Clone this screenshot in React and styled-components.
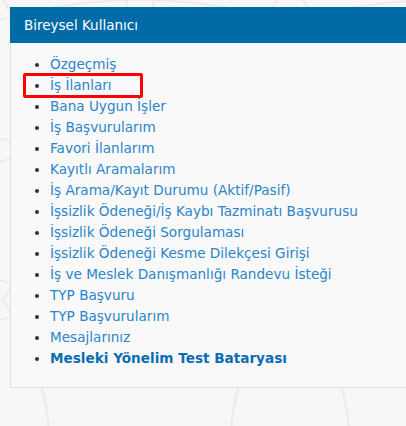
import React from 'react';
import styled, { createGlobalStyle } from 'styled-components';

const pattern = encodeURIComponent(
  `<svg xmlns="http://www.w3.org/2000/svg" width="300" height="300" viewBox="0 0 300 300">
    <g fill="none" stroke="#ebebeb" stroke-width="2">
      <path d="M-50 40 Q150 -40 350 40"/>
      <path d="M-50 260 Q150 340 350 260"/>
      <path d="M0 -20 Q120 150 0 320"/>
      <path d="M300 -20 Q180 150 300 320"/>
      <path d="M-40 120 Q150 200 340 120"/>
      <path d="M-40 180 Q150 100 340 180"/>
      <path d="M135 300 L150 250 L165 300"/>
      <path d="M135 0 L150 50 L165 0"/>
    </g>
  </svg>`
);

const GlobalStyle = createGlobalStyle`
  html, body {
    margin: 0;
    padding: 0;
    overflow: hidden;
  }
  body {
    background-color: #f7f7f7;
    background-image: url("data:image/svg+xml,${pattern}");
    background-position: -10px 0;
    font-family: "DejaVu Sans", Verdana, sans-serif;
  }
`;

const Page = styled.div`
  box-sizing: border-box;
  width: 100%;
  padding: 7px 0 38px 10px;
`;

const Panel = styled.div`
  background: #f9f9f9;
  border: 1px solid #e1e1e1;
  border-right: none;
`;

const PanelHeader = styled.div`
  background: #006ba6;
  color: #fff;
  height: 36px;
  line-height: 36px;
  padding-left: 14px;
  font-size: 13.5px;
  margin: -1px 0 0 -1px;
`;

const MenuList = styled.ul`
  margin: 0;
  padding: 11px 0 18px 39px;
  list-style: disc;
`;

const MenuItem = styled.li`
  position: relative;
  font-size: 13.6px;
  line-height: 21px;
  color: #333;

  ${(p) =>
    p.$highlighted &&
    `
    &::after {
      content: '';
      position: absolute;
      left: -27px;
      top: -2px;
      width: 114px;
      height: 19px;
      border: 3px solid #f00;
      border-radius: 2px;
      pointer-events: none;
    }
  `}
`;

const MenuLink = styled.a`
  color: ${(p) => (p.$bold ? '#0a6db3' : '#2a85c9')};
  font-weight: ${(p) => (p.$bold ? 'bold' : 'normal')};
  text-decoration: none;
  cursor: pointer;
`;

const items = [
  'Özgeçmiş',
  'İş İlanları',
  'Bana Uygun İşler',
  'İş Başvurularım',
  'Favori İlanlarım',
  'Kayıtlı Aramalarım',
  'İş Arama/Kayıt Durumu (Aktif/Pasif)',
  'İşsizlik Ödeneği/İş Kaybı Tazminatı Başvurusu',
  'İşsizlik Ödeneği Sorgulaması',
  'İşsizlik Ödeneği Kesme Dilekçesi Girişi',
  'İş ve Meslek Danışmanlığı Randevu İsteği',
  'TYP Başvuru',
  'TYP Başvurularım',
  'Mesajlarınız',
];

export default function App() {
  return (
    <>
      <GlobalStyle />
      <Page>
        <Panel>
          <PanelHeader>Bireysel Kullanıcı</PanelHeader>
          <MenuList>
            {items.map((label) => (
              <MenuItem key={label} $highlighted={label === 'İş İlanları'}>
                <MenuLink>{label}</MenuLink>
              </MenuItem>
            ))}
            <MenuItem>
              <MenuLink $bold>Mesleki Yönelim Test Bataryası</MenuLink>
            </MenuItem>
          </MenuList>
        </Panel>
      </Page>
    </>
  );
}
